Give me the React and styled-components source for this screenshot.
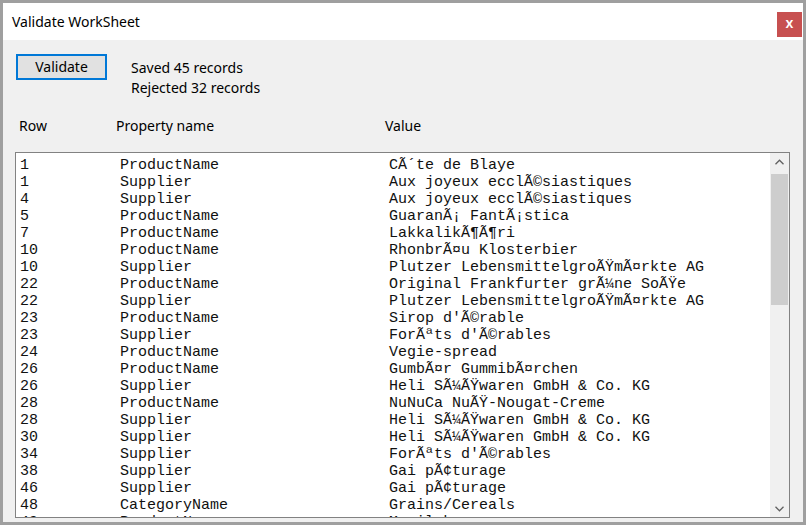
import React from "react";
import styled, { createGlobalStyle } from "styled-components";

const rows = [
  ["1", "ProductName", "CÃ´te de Blaye"],
  ["1", "Supplier", "Aux joyeux ecclÃ©siastiques"],
  ["4", "Supplier", "Aux joyeux ecclÃ©siastiques"],
  ["5", "ProductName", "GuaranÃ¡ FantÃ¡stica"],
  ["7", "ProductName", "LakkalikÃ¶Ã¶ri"],
  ["10", "ProductName", "RhonbrÃ¤u Klosterbier"],
  ["10", "Supplier", "Plutzer LebensmittelgroÃŸmÃ¤rkte AG"],
  ["22", "ProductName", "Original Frankfurter grÃ¼ne SoÃŸe"],
  ["22", "Supplier", "Plutzer LebensmittelgroÃŸmÃ¤rkte AG"],
  ["23", "ProductName", "Sirop d'Ã©rable"],
  ["23", "Supplier", "ForÃªts d'Ã©rables"],
  ["24", "ProductName", "Vegie-spread"],
  ["26", "ProductName", "GumbÃ¤r GummibÃ¤rchen"],
  ["26", "Supplier", "Heli SÃ¼ÃŸwaren GmbH & Co. KG"],
  ["28", "ProductName", "NuNuCa NuÃŸ-Nougat-Creme"],
  ["28", "Supplier", "Heli SÃ¼ÃŸwaren GmbH & Co. KG"],
  ["30", "Supplier", "Heli SÃ¼ÃŸwaren GmbH & Co. KG"],
  ["34", "Supplier", "ForÃªts d'Ã©rables"],
  ["38", "Supplier", "Gai pÃ¢turage"],
  ["46", "Supplier", "Gai pÃ¢turage"],
  ["48", "CategoryName", "Grains/Cereals"],
  ["49", "ProductName", "Maxilaku"],
];

const GlobalStyle = createGlobalStyle`
  html, body {
    margin: 0;
    padding: 0;
    background: #ffffff;
  }
  * {
    box-sizing: border-box;
  }
`;

const Window = styled.div`
  width: 806px;
  height: 525px;
  border: 3px solid #9f9f9f;
  display: flex;
  flex-direction: column;
  font-family: "Noto Sans", "Open Sans", sans-serif;
  color: #000;
  overflow: hidden;
`;

const TitleBar = styled.div`
  height: 37px;
  flex-shrink: 0;
  background: #ffffff;
  display: flex;
  align-items: flex-start;
  justify-content: space-between;
  padding-left: 9px;
`;

const Title = styled.div`
  font-size: 14px;
  line-height: 20px;
  margin-top: 9px;
`;

const CloseButton = styled.div`
  width: 25px;
  height: 25px;
  margin-top: 9px;
  margin-right: 1px;
  background: #c75050;
  color: #fff;
  font-size: 14px;
  font-weight: 600;
  line-height: 22px;
  text-align: center;
`;

const Body = styled.div`
  flex: 1;
  background: #f0f0f0;
  display: flex;
  flex-direction: column;
  padding: 0 13px 4px 12px;
  min-height: 0;
`;

const TopRow = styled.div`
  display: flex;
  align-items: flex-start;
  margin-top: 14px;
  padding-left: 1px;
`;

const Button = styled.div`
  width: 91px;
  height: 26px;
  border: 2px solid #0078d7;
  background: #e1e1e1;
  font-size: 14px;
  line-height: 21px;
  text-align: center;
`;

const Status = styled.div`
  margin-left: 24px;
  margin-top: 4px;
  font-size: 14px;
  line-height: 20px;
`;

const HeaderRow = styled.div`
  display: grid;
  grid-template-columns: 97px 269px 1fr;
  margin-top: 18px;
  padding-left: 4px;
  font-size: 14px;
  line-height: 20px;
`;

const ListBox = styled.div`
  flex: 1;
  margin-top: 16px;
  border: 1px solid #828282;
  background: #ffffff;
  display: flex;
  min-height: 0;
`;

const Rows = styled.div`
  flex: 1;
  overflow: hidden;
  padding: 4px 0 0 4px;
  font-family: "Liberation Mono", "Courier New", monospace;
  font-size: 15px;
  line-height: 17px;
  color: #111;
`;

const Row = styled.div`
  display: grid;
  grid-template-columns: 100px 269px 1fr;
  white-space: pre;
`;

const Scrollbar = styled.div`
  width: 19px;
  background: #f0f0f0;
  display: flex;
  flex-direction: column;
  padding: 0 1px;
`;

const Arrow = styled.div`
  height: 17px;
  display: flex;
  align-items: center;
  justify-content: center;
`;

const Track = styled.div`
  flex: 1;
  padding-top: 4px;
`;

const Thumb = styled.div`
  height: 131px;
  background: #cdcdcd;
`;

const Chevron = ({ up }) => (
  <svg width="9" height="6" viewBox="0 0 9 6">
    <path
      d={up ? "M0.5 5.2 L4.5 1.2 L8.5 5.2" : "M0.5 0.8 L4.5 4.8 L8.5 0.8"}
      fill="none"
      stroke="#606060"
      strokeWidth="1.3"
    />
  </svg>
);

const App = () => {
  return (
    <>
      <GlobalStyle />
      <Window>
        <TitleBar>
          <Title>Validate WorkSheet</Title>
          <CloseButton>x</CloseButton>
        </TitleBar>
        <Body>
          <TopRow>
            <Button>Validate</Button>
            <Status>
              <div>Saved 45 records</div>
              <div>Rejected 32 records</div>
            </Status>
          </TopRow>
          <HeaderRow>
            <span>Row</span>
            <span>Property name</span>
            <span>Value</span>
          </HeaderRow>
          <ListBox>
            <Rows>
              {rows.map((r, i) => (
                <Row key={i}>
                  <span>{r[0]}</span>
                  <span>{r[1]}</span>
                  <span>{r[2]}</span>
                </Row>
              ))}
            </Rows>
            <Scrollbar>
              <Arrow>
                <Chevron up />
              </Arrow>
              <Track>
                <Thumb />
              </Track>
              <Arrow>
                <Chevron />
              </Arrow>
            </Scrollbar>
          </ListBox>
        </Body>
      </Window>
    </>
  );
};

export default App;
